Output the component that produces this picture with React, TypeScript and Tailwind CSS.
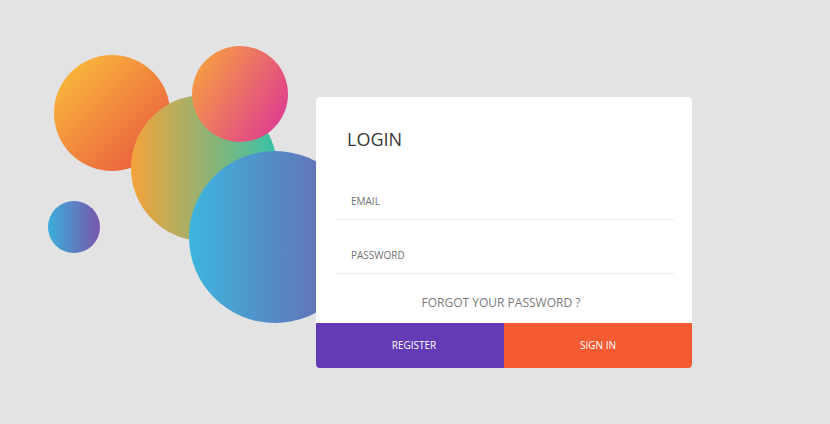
function Bubbles() {
  return (
    <svg
      className="absolute left-0 top-0"
      width="360"
      height="340"
      viewBox="0 0 360 340"
    >
      <defs>
        <linearGradient id="gOrange" x1="0" y1="0" x2="1" y2="1">
          <stop offset="0" stopColor="#fbc33c" />
          <stop offset="1" stopColor="#e8503f" />
        </linearGradient>
        <linearGradient id="gGreen" x1="0" y1="0" x2="1" y2="0">
          <stop offset="0" stopColor="#f4a33a" />
          <stop offset="1" stopColor="#37c2a8" />
        </linearGradient>
        <linearGradient id="gPink" x1="0" y1="0.2" x2="1" y2="0.8">
          <stop offset="0" stopColor="#f6a040" />
          <stop offset="1" stopColor="#de3a92" />
        </linearGradient>
        <linearGradient id="gBlue" x1="0" y1="0" x2="1" y2="0">
          <stop offset="0" stopColor="#3db6dd" />
          <stop offset="1" stopColor="#6e5eae" />
        </linearGradient>
        <linearGradient id="gSmall" x1="0" y1="0" x2="1" y2="0">
          <stop offset="0" stopColor="#3aaedb" />
          <stop offset="1" stopColor="#7a55ab" />
        </linearGradient>
      </defs>
      <circle cx="112" cy="113" r="58" fill="url(#gOrange)" />
      <circle cx="204" cy="168" r="73" fill="url(#gGreen)" />
      <circle cx="240" cy="94" r="48" fill="url(#gPink)" />
      <circle cx="275" cy="237" r="86" fill="url(#gBlue)" />
      <circle cx="74" cy="227" r="26" fill="url(#gSmall)" />
    </svg>
  );
}

function Field({ label }: { label: string }) {
  return (
    <div className="border-b border-[#ececec] pb-[10px] pl-[16px] pt-[13px]">
      <div className="h-[16px] text-[10px] leading-[16px] text-[#707070]">
        {label}
      </div>
    </div>
  );
}

export default function App() {
  return (
    <div
      className="relative h-[424px] w-[830px] overflow-hidden bg-[#e3e3e3] pl-[316px] pt-[97px]"
      style={{ fontFamily: '"Open Sans", "Liberation Sans", sans-serif' }}
    >
      <Bubbles />
      <div className="relative z-10 w-[376px] overflow-hidden rounded-[4px] bg-white">
        <div className="px-[31px] pt-[29px]">
          <h1 className="h-[26px] text-[18px] leading-[26px] text-[#383838]">
            LOGIN
          </h1>
        </div>
        <div className="flex flex-col gap-[14px] pl-[19px] pr-[18px] pt-[28px]">
          <Field label="EMAIL" />
          <Field label="PASSWORD" />
        </div>
        <div className="flex h-[49px] items-center justify-center pr-[6px] pt-[8px] text-[12px] text-[#7a7a7a]">
          FORGOT YOUR PASSWORD ?
        </div>
        <div className="grid h-[45px] grid-cols-2 text-[10px] font-medium text-white">
          <button className="flex items-center justify-center bg-[#643bb4] pl-[8px]">
            REGISTER
          </button>
          <button className="flex items-center justify-center bg-[#f55a31]">
            SIGN IN
          </button>
        </div>
      </div>
    </div>
  );
}
